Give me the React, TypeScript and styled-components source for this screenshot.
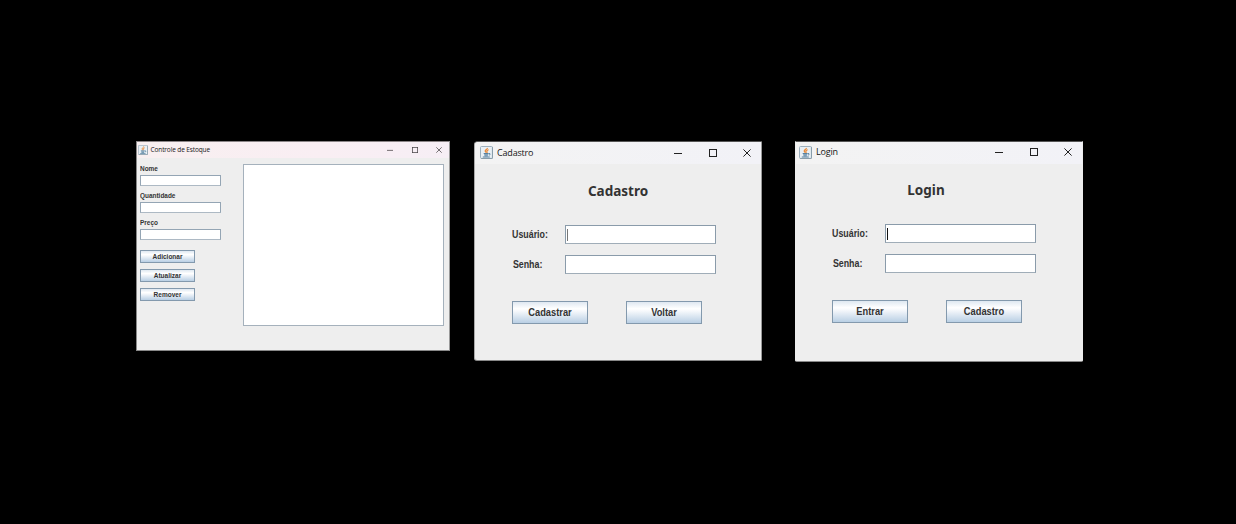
import React from 'react';
import styled, { createGlobalStyle } from 'styled-components';

const GlobalStyle = createGlobalStyle`
  * { box-sizing: border-box; }
  body { margin: 0; background: #000; }
`;

const Desktop = styled.main`
  display: flex;
  align-items: flex-start;
  width: 1236px;
  height: 524px;
  padding: 141px 0 0 136px;
  background: #000;
  overflow: hidden;
`;

const Frame = styled.section<{ $width: number; $height: number; $gap?: number; $small?: boolean; $flush?: boolean }>`
  display: flex;
  flex-direction: column;
  flex: none;
  width: ${p => p.$width}px;
  height: ${p => p.$height}px;
  margin-left: ${p => p.$gap ?? 0}px;
  background: #eee;
  border: 1px solid #888;
  border-top-color: ${p => (p.$small ? '#8b8587' : '#555')};
  border-left-color: ${p => (p.$small ? '#888' : p.$flush ? '#eee' : '#aaa')};
  border-right-color: ${p => (p.$flush ? '#eee' : '#999')};
  border-radius: ${p => (p.$small ? '0' : p.$flush ? '0 0 2px 2px' : '4px 1px 1px 3px')};
  overflow: hidden;
`;

const TitleBar = styled.header<{ $small?: boolean; $pad: number; $lift?: number }>`
  display: flex;
  align-items: center;
  flex: none;
  height: ${p => (p.$small ? 16 : 22)}px;
  padding: 0 0 ${p => p.$lift ?? 0}px ${p => p.$pad}px;
  background: ${p =>
    p.$small ? 'linear-gradient(90deg, #f8eff0, #f9eef3 60%, #f6eef5)' : 'linear-gradient(90deg, #f3f3f3, #f2f2f7)'};
`;

const Caption = styled.span<{ $small?: boolean }>`
  flex: 1;
  margin: ${p => (p.$small ? '0 0 0 2.5px' : '0 0 0 4px')};
  font: ${p => (p.$small ? '6.5px' : '9px')}/12px "Open Sans", "Noto Sans", sans-serif;
  letter-spacing: ${p => (p.$small ? -0.12 : -0.18)}px;
  color: #151515;
  white-space: nowrap;
`;

const Controls = styled.div<{ $small?: boolean; $right: number }>`
  display: flex;
  align-items: center;
  gap: ${p => (p.$small ? 18.5 : 26.5)}px;
  margin-right: ${p => p.$right}px;
  svg {
    display: block;
    width: ${p => (p.$small ? 6 : 8)}px;
    height: ${p => (p.$small ? 6 : 8)}px;
    fill: none;
    stroke: ${p => (p.$small ? '#4a4548' : '#222')};
    stroke-width: 1;
  }
`;

const LoginBody = styled.div<{ $left: number }>`
  display: flex;
  flex-direction: column;
  padding-left: ${p => p.$left}px;
`;

const Heading = styled.h1<{ $width: number; $top: number }>`
  width: ${p => p.$width}px;
  margin: ${p => p.$top}px 0 0;
  font: bold 13.5px/20px "Noto Sans", "Open Sans", sans-serif;
  text-align: center;
  color: #333;
`;

const Fields = styled.div`
  display: grid;
  grid-template-columns: 53px 151px;
  row-gap: 11px;
  margin-top: 24px;
  align-items: center;
`;

const Label = styled.label<{ $indent?: number }>`
  padding-left: ${p => p.$indent ?? 0}px;
  font: bold 10px/19px "Liberation Sans", Arial, sans-serif;
  transform: scaleX(0.885);
  transform-origin: left;
  color: #333;
`;

const Input = styled.div`
  display: flex;
  align-items: center;
  height: 19px;
  padding-left: 1px;
  background: #fff;
  border: 1px solid #8a9baa;
  border-bottom-color: #a0adb8;
`;

const Caret = styled.i<{ $dark?: boolean }>`
  width: 1px;
  height: 12px;
  background: ${p => (p.$dark ? '#111' : '#777')};
`;

const Actions = styled.div`
  display: flex;
  gap: 38px;
  margin-top: 27px;
`;

const Button = styled.button<{ $small?: boolean }>`
  width: ${p => (p.$small ? 55 : 76)}px;
  height: ${p => (p.$small ? 13 : 23)}px;
  padding: ${p => (p.$small ? 0 : '1px 0 0')};
  border: 1px solid #8399ad;
  border-radius: 0;
  background: linear-gradient(#dfe8f1 0%, #fff 32%, #f7f9fc 42%, #b9cfe4 100%);
  font: bold ${p => (p.$small ? '7px/11px' : '10px/20px')} "Liberation Sans", Arial, sans-serif;
  color: #333;
`;

const ButtonText = styled.span`
  display: block;
  transform: scaleX(0.93);
`;

const StockBody = styled.div`
  display: flex;
  flex: 1;
  padding: 5px 5px 0 3px;
`;

const Sidebar = styled.div`
  display: flex;
  flex-direction: column;
  width: 103px;
`;

const StockField = styled.div`
  display: flex;
  flex-direction: column;
  height: 27px;
`;

const StockLabel = styled.label`
  height: 12px;
  font: bold 7px/11px "Liberation Sans", Arial, sans-serif;
  transform: scaleX(0.92);
  transform-origin: left;
  color: #333;
`;

const StockInput = styled.div`
  width: 81px;
  height: 11px;
  background: #fff;
  border: 1px solid #94a5b4;
  border-bottom-color: #adb9c4;
`;

const StockActions = styled.div`
  display: flex;
  flex-direction: column;
  gap: 5.7px;
  margin-top: 6.3px;
`;

const List = styled.div`
  width: 201px;
  height: 162px;
  margin-top: 1px;
  background: #fff;
  border: 1px solid #a5b1bc;
`;

const JavaIcon = ({ size }: { size: number }) => (
  <svg width={size} height={size} viewBox="0 0 13 13" fill="none">
    <rect x=".5" y=".5" width="12" height="12" rx="1" fill="#e9f0f5" stroke="#9db0bd" />
    <path d="M1 12.4h11.4V1" stroke="#7d929f" strokeWidth=".7" />
    <path d="M7.4 2C7.8 3.3 5 3.8 5.2 5.1c.2.7.8.9.7 1.7M8.7 3.7C7.1 4.2 6.5 4.9 7 5.7c.3.5.1.8-.2 1.1" stroke="#e98632" strokeWidth="1.2" />
    <path d="M3.7 7.5h5M4.2 8.8h4.1M4.5 9.9h3.3M2.8 11h7M9 7.5c1.9-.2 1.5 1.4 0 1.5" stroke="#5681a0" strokeWidth="1" />
  </svg>
);

const WindowControls = ({ small, right }: { small?: boolean; right: number }) => (
  <Controls $small={small} $right={right}>
    <svg viewBox="0 0 8 8"><path d="M0 4.5h8" /></svg>
    <svg viewBox="0 0 8 8"><rect x=".5" y=".5" width="7" height="7" /></svg>
    <svg viewBox="0 0 8 8"><path d="M.4.4l7.2 7.2M7.6.4L.4 7.6" /></svg>
  </Controls>
);

interface AccountWindowProps {
  title: string;
  width: number;
  height: number;
  gap: number;
  pad: number;
  lift: number;
  left: number;
  top: number;
  headingWidth: number;
  active?: boolean;
  actions: string[];
}

const AccountWindow = (p: AccountWindowProps) => (
  <Frame $width={p.width} $height={p.height} $gap={p.gap} $flush={p.active}>
    <TitleBar $pad={p.pad} $lift={p.lift}>
      <JavaIcon size={13} />
      <Caption>{p.title}</Caption>
      <WindowControls right={10} />
    </TitleBar>
    <LoginBody $left={p.left}>
      <Heading $width={p.headingWidth} $top={p.top}>{p.title}</Heading>
      <Fields>
        <Label>Usuário:</Label>
        <Input><Caret $dark={p.active} /></Input>
        <Label $indent={1}>Senha:</Label>
        <Input />
      </Fields>
      <Actions>
        {p.actions.map(a => <Button key={a}><ButtonText>{a}</ButtonText></Button>)}
      </Actions>
    </LoginBody>
  </Frame>
);

export default function App() {
  return (
    <>
      <GlobalStyle />
      <Desktop>
        <Frame $width={314} $height={210} $small>
          <TitleBar $small $pad={1}>
            <JavaIcon size={10} />
            <Caption $small>Controle de Estoque</Caption>
            <WindowControls small right={7} />
          </TitleBar>
          <StockBody>
            <Sidebar>
              {['Nome', 'Quantidade', 'Preço'].map(name => (
                <StockField key={name}>
                  <StockLabel>{name}</StockLabel>
                  <StockInput />
                </StockField>
              ))}
              <StockActions>
                {['Adicionar', 'Atualizar', 'Remover'].map(name => (
                  <Button key={name} $small><ButtonText>{name}</ButtonText></Button>
                ))}
              </StockActions>
            </Sidebar>
            <List />
          </StockBody>
        </Frame>
        <AccountWindow title="Cadastro" width={288} height={220} gap={24} pad={5} lift={1} left={37} top={17} headingWidth={212} actions={['Cadastrar', 'Voltar']} />
        <AccountWindow title="Login" width={288} height={221} gap={33} pad={3} lift={2} left={35.5} top={16} headingWidth={189} active actions={['Entrar', 'Cadastro']} />
      </Desktop>
    </>
  );
}
